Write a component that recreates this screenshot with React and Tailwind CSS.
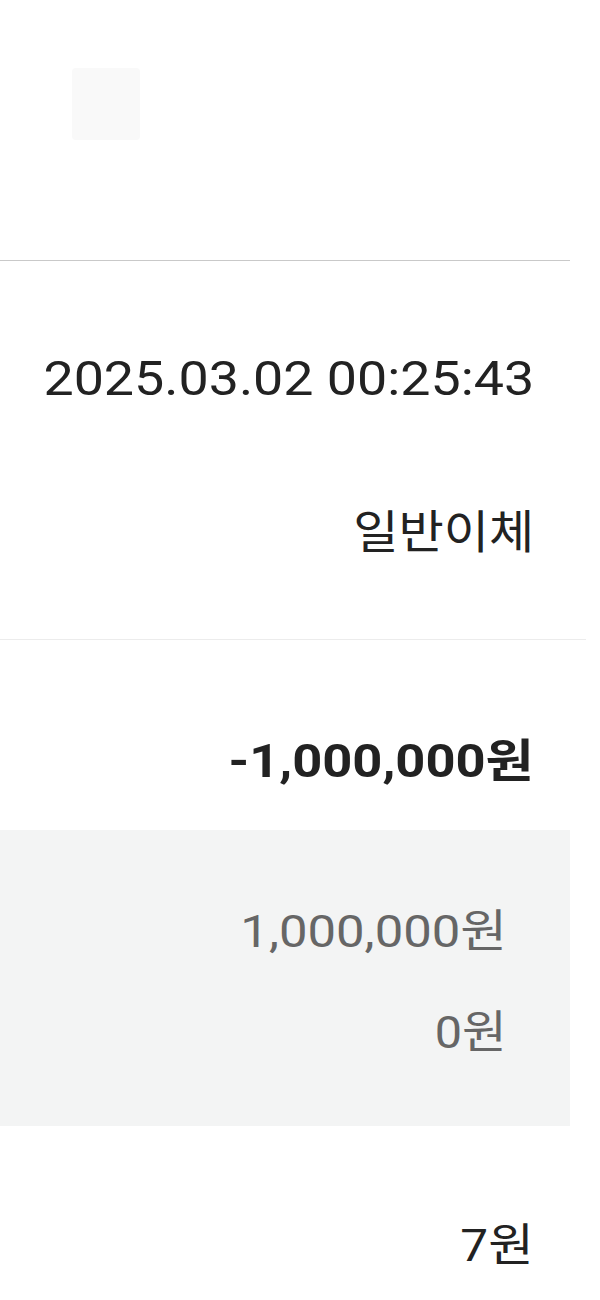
import React from 'react'

const font = { fontFamily: 'Roboto, "Noto Sans CJK KR", sans-serif' }

const Row = ({ height, children, className = '' }) => (
  <div className={`flex items-center justify-end ${height} ${className}`}>{children}</div>
)

const Txt = ({ className = '', children }) => (
  <span className={`inline-block leading-none origin-right ${className}`}>{children}</span>
)

export default function App() {
  return (
    <div className="w-[600px] h-[1300px] bg-white overflow-hidden text-[#222]" style={font}>
      {/* faded header area */}
      <div className="h-[260px] pt-[68px] pl-[72px]">
        <div className="w-[68px] h-[72px] bg-[#f9f9f9] rounded-sm" />
      </div>
      <div className="w-[570px] h-px bg-[#c9c9c9]" />

      <div className="pr-[66px]">
        <Row height="h-[210px]" className="pt-[26px]">
          <Txt className="text-[48px] scale-x-[1.12]">2025.03.02 00:25:43</Txt>
        </Row>
        <Row height="h-[168px]" className="pb-[46px]">
          <Txt className="text-[46px] scale-x-[1.07]">일반이체</Txt>
        </Row>
      </div>
      <div className="w-[586px] h-px bg-[#ececec]" />

      <div className="pr-[66px]">
        <Row height="h-[190px]" className="pt-[52px]">
          <Txt className="text-[46px] font-bold scale-x-[1.14]">-1,000,000원</Txt>
        </Row>
      </div>

      <div className="w-[570px] h-[296px] bg-[#f3f4f4] pr-[63px] pt-[76px]">
        <Row height="h-[50px]">
          <Txt className="text-[45px] text-[#666] scale-x-[1.13]">1,000,000원</Txt>
        </Row>
        <Row height="h-[50px]" className="mt-[51px]">
          <Txt className="text-[45px] text-[#666] scale-x-[1.08]">0원</Txt>
        </Row>
      </div>

      <div className="pr-[66px]">
        <Row height="h-[238px]">
          <Txt className="text-[45px] scale-x-[1.1]">7원</Txt>
        </Row>
      </div>
    </div>
  )
}
